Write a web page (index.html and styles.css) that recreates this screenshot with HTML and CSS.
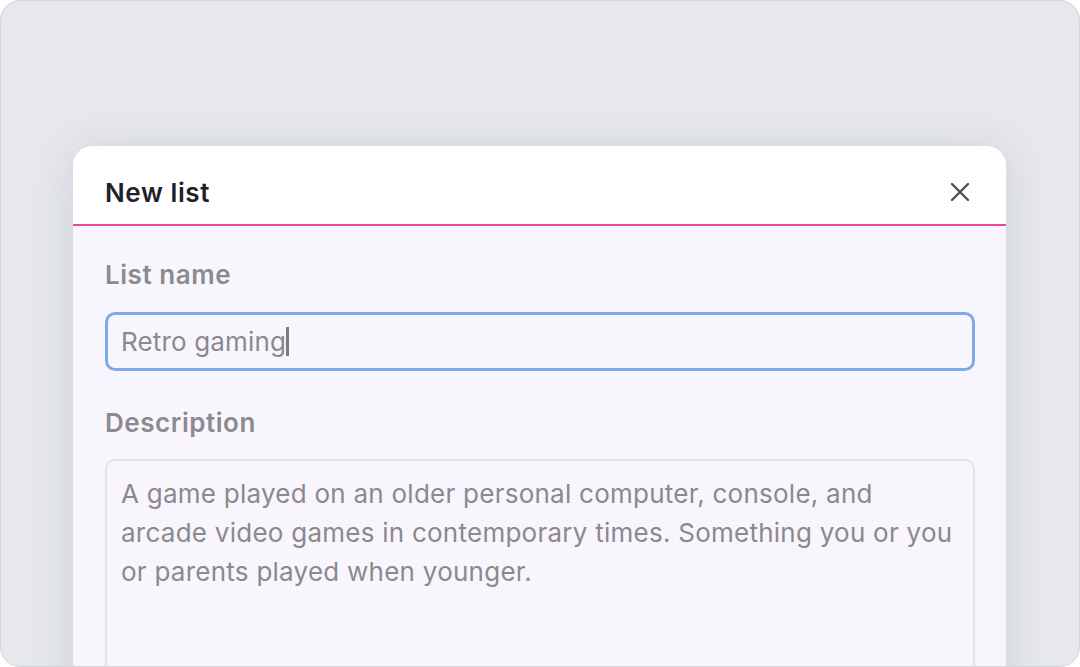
FILE: index.html
```html
<!DOCTYPE html>
<html>
<head>
<meta charset="utf-8">
<link rel="stylesheet" href="styles.css">
</head>
<body>
<div class="frame">
  <div class="modal">
    <div class="modal-header">
      <h2 class="title">New list</h2>
      <button class="close" aria-label="Close">
        <svg width="20" height="20" viewBox="0 0 20 20"><path d="M2 2 L18 18 M18 2 L2 18" stroke="#4b5058" stroke-width="2.4" stroke-linecap="round" fill="none"/></svg>
      </button>
    </div>
    <div class="modal-body">
      <div class="label">List name</div>
      <div class="input focused"><span class="value">Retro gaming</span><span class="caret"></span></div>
      <div class="label label-desc">Description</div>
      <div class="textarea">A game played on an older personal computer, console, and arcade video games in contemporary times. Something you or you or parents played when younger.</div>
    </div>
  </div>
</div>
</body>
</html>
```
FILE: styles.css
```css
* { box-sizing: border-box; }
html, body { margin: 0; padding: 0; }
body {
  width: 1080px;
  height: 667px;
  overflow: hidden;
  font-family: Inter, "Noto Sans", sans-serif;
  background: #ffffff;
}
.frame {
  width: 1080px;
  height: 667px;
  border: 1px solid #d3d6db;
  border-radius: 20px;
  background: #e6e8ec;
  overflow: hidden;
  padding-top: 145px;
  padding-left: 72px;
}
.modal {
  width: 933px;
  height: 600px;
  border-radius: 20px 20px 0 0;
  background: #f8f6fc;
  box-shadow: 0 4px 40px rgba(120, 125, 140, 0.22);
  overflow: hidden;
}
.modal-header {
  height: 80px;
  background: #ffffff;
  border-bottom: 2px solid #ec4899;
  display: flex;
  align-items: center;
  justify-content: space-between;
  padding: 14px 36px 0 32px;
}
.title {
  margin: 0;
  font-size: 26px;
  font-weight: 600;
  color: #1e2127;
  letter-spacing: 0.6px;
}
.close {
  border: 0;
  background: none;
  padding: 0;
  width: 20px;
  height: 20px;
  display: flex;
  cursor: pointer;
}
.modal-body {
  padding: 33px 31px 0 32px;
  display: flex;
  flex-direction: column;
}
.label {
  font-size: 26px;
  line-height: 32px;
  font-weight: 600;
  color: #8b8a91;
  letter-spacing: 0.55px;
}
.input {
  margin-top: 21px;
  height: 59px;
  border: 3px solid #7fa9ea;
  border-radius: 10px;
  display: flex;
  align-items: center;
  padding-left: 13px;
  font-size: 26px;
  color: #8a898f;
  letter-spacing: 0.15px;
}
.caret {
  display: inline-block;
  width: 3px;
  height: 29px;
  background: #7c7b82;
  margin-left: 0;
}
.label-desc {
  margin-top: 36px;
}
.textarea {
  margin-top: 20px;
  height: 260px;
  border: 2px solid #e4e3ea;
  border-radius: 10px;
  padding: 13px 18px 13px 14px;
  font-size: 26px;
  line-height: 39px;
  color: #8a898f;
  letter-spacing: 0.25px;
}
```
